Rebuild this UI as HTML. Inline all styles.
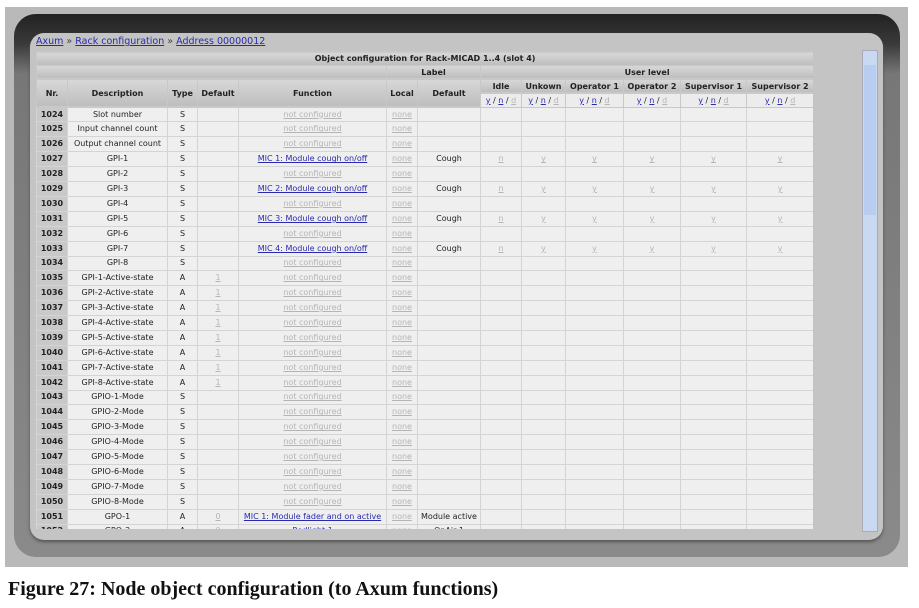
<!DOCTYPE html>
<html><head><meta charset="utf-8">
<style>
body{margin:0;width:919px;height:608px;background:#fff;position:relative;overflow:hidden;font-family:"DejaVu Sans","Liberation Sans",sans-serif}
.outer{position:absolute;left:5px;top:7px;width:903px;height:560px;background:#b9b9b9}
.dark{position:absolute;left:14px;top:14px;width:886px;height:543px;border-radius:22px;background:linear-gradient(#222 0,#3a3a3a 30px,#777 60px,#8a8a8a 100%)}
.inner{position:absolute;left:30px;top:33px;width:853px;height:507px;border-radius:14px;background:#c4c4c4;overflow:hidden;box-shadow:0 2px 3px #555}
.crumb{position:absolute;left:6px;top:3px;font-size:9.5px;color:#444}
.crumb a{color:#2a2ab0;text-decoration:underline}
.tw{position:absolute;left:6px;top:18px;width:777px;height:478px;overflow:hidden}
table{border-collapse:collapse;table-layout:fixed;width:777px;font-size:8px;color:#222}
td,th{border:1px solid #d4d4d4;padding:0;text-align:center;white-space:nowrap;overflow:hidden;height:13.9px;line-height:12px}
th{background:linear-gradient(#d8d8d8,#bdbdbd);font-weight:bold;border-color:#c8c8c8;height:12.8px;line-height:11px}
td{background:#efefef}
td.n{background:#c9c9c9;font-weight:bold;color:#222}
.g{color:#b5b5b5;text-decoration:underline}
.l{color:#2a2ab0;text-decoration:underline}
.xnd{background:#ececec;font-weight:normal}
.sb{position:absolute;left:832px;top:17px;width:14px;height:480px;background:#c9d9f2;border:1px solid #aab}
.sb .th{position:absolute;left:1px;top:14px;width:12px;height:150px;background:#b8cdf0}
.cap{position:absolute;left:8px;top:578px;font-family:"Liberation Serif",serif;font-weight:bold;font-size:20px;color:#111}
</style></head><body>
<div class="outer"></div>
<div class="dark"></div>
<div class="inner">
<div class="crumb"><a>Axum</a> » <a>Rack configuration</a> » <a>Address 00000012</a></div>
<div class="tw">
<table>
<colgroup><col style="width:31px"><col style="width:100px"><col style="width:30px"><col style="width:41px"><col style="width:148px"><col style="width:31px"><col style="width:63px"><col style="width:41px"><col style="width:44px"><col style="width:58px"><col style="width:57px"><col style="width:66px"><col style="width:67px"></colgroup>
<tr><th colspan="13">Object configuration for Rack-MICAD 1..4 (slot 4)</th></tr>
<tr><th colspan="5"></th><th colspan="2">Label</th><th colspan="6">User level</th></tr>
<tr><th rowspan="2" style="height:27px">Nr.</th><th rowspan="2">Description</th><th rowspan="2">Type</th><th rowspan="2">Default</th><th rowspan="2">Function</th><th rowspan="2">Local</th><th rowspan="2">Default</th><th>Idle</th><th>Unkown</th><th>Operator 1</th><th>Operator 2</th><th>Supervisor 1</th><th>Supervisor 2</th></tr>
<tr><th class="xnd"><span class="l">y</span> / <span class="l">n</span> / <span class="g">d</span></th><th class="xnd"><span class="l">y</span> / <span class="l">n</span> / <span class="g">d</span></th><th class="xnd"><span class="l">y</span> / <span class="l">n</span> / <span class="g">d</span></th><th class="xnd"><span class="l">y</span> / <span class="l">n</span> / <span class="g">d</span></th><th class="xnd"><span class="l">y</span> / <span class="l">n</span> / <span class="g">d</span></th><th class="xnd"><span class="l">y</span> / <span class="l">n</span> / <span class="g">d</span></th></tr>
<tr><td class="n">1024</td><td>Slot number</td><td>S</td><td></td><td><span class="g">not configured</span></td><td><span class="g">none</span></td><td></td><td></td><td></td><td></td><td></td><td></td><td></td></tr>
<tr><td class="n">1025</td><td>Input channel count</td><td>S</td><td></td><td><span class="g">not configured</span></td><td><span class="g">none</span></td><td></td><td></td><td></td><td></td><td></td><td></td><td></td></tr>
<tr><td class="n">1026</td><td>Output channel count</td><td>S</td><td></td><td><span class="g">not configured</span></td><td><span class="g">none</span></td><td></td><td></td><td></td><td></td><td></td><td></td><td></td></tr>
<tr><td class="n">1027</td><td>GPI-1</td><td>S</td><td></td><td><span class="l">MIC 1: Module cough on/off</span></td><td><span class="g">none</span></td><td>Cough</td><td><span class="g">n</span></td><td><span class="g">y</span></td><td><span class="g">y</span></td><td><span class="g">y</span></td><td><span class="g">y</span></td><td><span class="g">y</span></td></tr>
<tr><td class="n">1028</td><td>GPI-2</td><td>S</td><td></td><td><span class="g">not configured</span></td><td><span class="g">none</span></td><td></td><td></td><td></td><td></td><td></td><td></td><td></td></tr>
<tr><td class="n">1029</td><td>GPI-3</td><td>S</td><td></td><td><span class="l">MIC 2: Module cough on/off</span></td><td><span class="g">none</span></td><td>Cough</td><td><span class="g">n</span></td><td><span class="g">y</span></td><td><span class="g">y</span></td><td><span class="g">y</span></td><td><span class="g">y</span></td><td><span class="g">y</span></td></tr>
<tr><td class="n">1030</td><td>GPI-4</td><td>S</td><td></td><td><span class="g">not configured</span></td><td><span class="g">none</span></td><td></td><td></td><td></td><td></td><td></td><td></td><td></td></tr>
<tr><td class="n">1031</td><td>GPI-5</td><td>S</td><td></td><td><span class="l">MIC 3: Module cough on/off</span></td><td><span class="g">none</span></td><td>Cough</td><td><span class="g">n</span></td><td><span class="g">y</span></td><td><span class="g">y</span></td><td><span class="g">y</span></td><td><span class="g">y</span></td><td><span class="g">y</span></td></tr>
<tr><td class="n">1032</td><td>GPI-6</td><td>S</td><td></td><td><span class="g">not configured</span></td><td><span class="g">none</span></td><td></td><td></td><td></td><td></td><td></td><td></td><td></td></tr>
<tr><td class="n">1033</td><td>GPI-7</td><td>S</td><td></td><td><span class="l">MIC 4: Module cough on/off</span></td><td><span class="g">none</span></td><td>Cough</td><td><span class="g">n</span></td><td><span class="g">y</span></td><td><span class="g">y</span></td><td><span class="g">y</span></td><td><span class="g">y</span></td><td><span class="g">y</span></td></tr>
<tr><td class="n">1034</td><td>GPI-8</td><td>S</td><td></td><td><span class="g">not configured</span></td><td><span class="g">none</span></td><td></td><td></td><td></td><td></td><td></td><td></td><td></td></tr>
<tr><td class="n">1035</td><td>GPI-1-Active-state</td><td>A</td><td><span class="g">1</span></td><td><span class="g">not configured</span></td><td><span class="g">none</span></td><td></td><td></td><td></td><td></td><td></td><td></td><td></td></tr>
<tr><td class="n">1036</td><td>GPI-2-Active-state</td><td>A</td><td><span class="g">1</span></td><td><span class="g">not configured</span></td><td><span class="g">none</span></td><td></td><td></td><td></td><td></td><td></td><td></td><td></td></tr>
<tr><td class="n">1037</td><td>GPI-3-Active-state</td><td>A</td><td><span class="g">1</span></td><td><span class="g">not configured</span></td><td><span class="g">none</span></td><td></td><td></td><td></td><td></td><td></td><td></td><td></td></tr>
<tr><td class="n">1038</td><td>GPI-4-Active-state</td><td>A</td><td><span class="g">1</span></td><td><span class="g">not configured</span></td><td><span class="g">none</span></td><td></td><td></td><td></td><td></td><td></td><td></td><td></td></tr>
<tr><td class="n">1039</td><td>GPI-5-Active-state</td><td>A</td><td><span class="g">1</span></td><td><span class="g">not configured</span></td><td><span class="g">none</span></td><td></td><td></td><td></td><td></td><td></td><td></td><td></td></tr>
<tr><td class="n">1040</td><td>GPI-6-Active-state</td><td>A</td><td><span class="g">1</span></td><td><span class="g">not configured</span></td><td><span class="g">none</span></td><td></td><td></td><td></td><td></td><td></td><td></td><td></td></tr>
<tr><td class="n">1041</td><td>GPI-7-Active-state</td><td>A</td><td><span class="g">1</span></td><td><span class="g">not configured</span></td><td><span class="g">none</span></td><td></td><td></td><td></td><td></td><td></td><td></td><td></td></tr>
<tr><td class="n">1042</td><td>GPI-8-Active-state</td><td>A</td><td><span class="g">1</span></td><td><span class="g">not configured</span></td><td><span class="g">none</span></td><td></td><td></td><td></td><td></td><td></td><td></td><td></td></tr>
<tr><td class="n">1043</td><td>GPIO-1-Mode</td><td>S</td><td></td><td><span class="g">not configured</span></td><td><span class="g">none</span></td><td></td><td></td><td></td><td></td><td></td><td></td><td></td></tr>
<tr><td class="n">1044</td><td>GPIO-2-Mode</td><td>S</td><td></td><td><span class="g">not configured</span></td><td><span class="g">none</span></td><td></td><td></td><td></td><td></td><td></td><td></td><td></td></tr>
<tr><td class="n">1045</td><td>GPIO-3-Mode</td><td>S</td><td></td><td><span class="g">not configured</span></td><td><span class="g">none</span></td><td></td><td></td><td></td><td></td><td></td><td></td><td></td></tr>
<tr><td class="n">1046</td><td>GPIO-4-Mode</td><td>S</td><td></td><td><span class="g">not configured</span></td><td><span class="g">none</span></td><td></td><td></td><td></td><td></td><td></td><td></td><td></td></tr>
<tr><td class="n">1047</td><td>GPIO-5-Mode</td><td>S</td><td></td><td><span class="g">not configured</span></td><td><span class="g">none</span></td><td></td><td></td><td></td><td></td><td></td><td></td><td></td></tr>
<tr><td class="n">1048</td><td>GPIO-6-Mode</td><td>S</td><td></td><td><span class="g">not configured</span></td><td><span class="g">none</span></td><td></td><td></td><td></td><td></td><td></td><td></td><td></td></tr>
<tr><td class="n">1049</td><td>GPIO-7-Mode</td><td>S</td><td></td><td><span class="g">not configured</span></td><td><span class="g">none</span></td><td></td><td></td><td></td><td></td><td></td><td></td><td></td></tr>
<tr><td class="n">1050</td><td>GPIO-8-Mode</td><td>S</td><td></td><td><span class="g">not configured</span></td><td><span class="g">none</span></td><td></td><td></td><td></td><td></td><td></td><td></td><td></td></tr>
<tr><td class="n">1051</td><td>GPO-1</td><td>A</td><td><span class="g">0</span></td><td><span class="l">MIC 1: Module fader and on active</span></td><td><span class="g">none</span></td><td>Module active</td><td></td><td></td><td></td><td></td><td></td><td></td></tr>
<tr><td class="n">1052</td><td>GPO-2</td><td>A</td><td><span class="g">0</span></td><td><span class="l">Redlight 1</span></td><td><span class="g">none</span></td><td>OnAir 1</td><td></td><td></td><td></td><td></td><td></td><td></td></tr>
</table>
</div>
<div class="sb"><div class="th"></div></div>
</div>
<div class="cap">Figure 27: Node object configuration (to Axum functions)</div>
</body></html>
